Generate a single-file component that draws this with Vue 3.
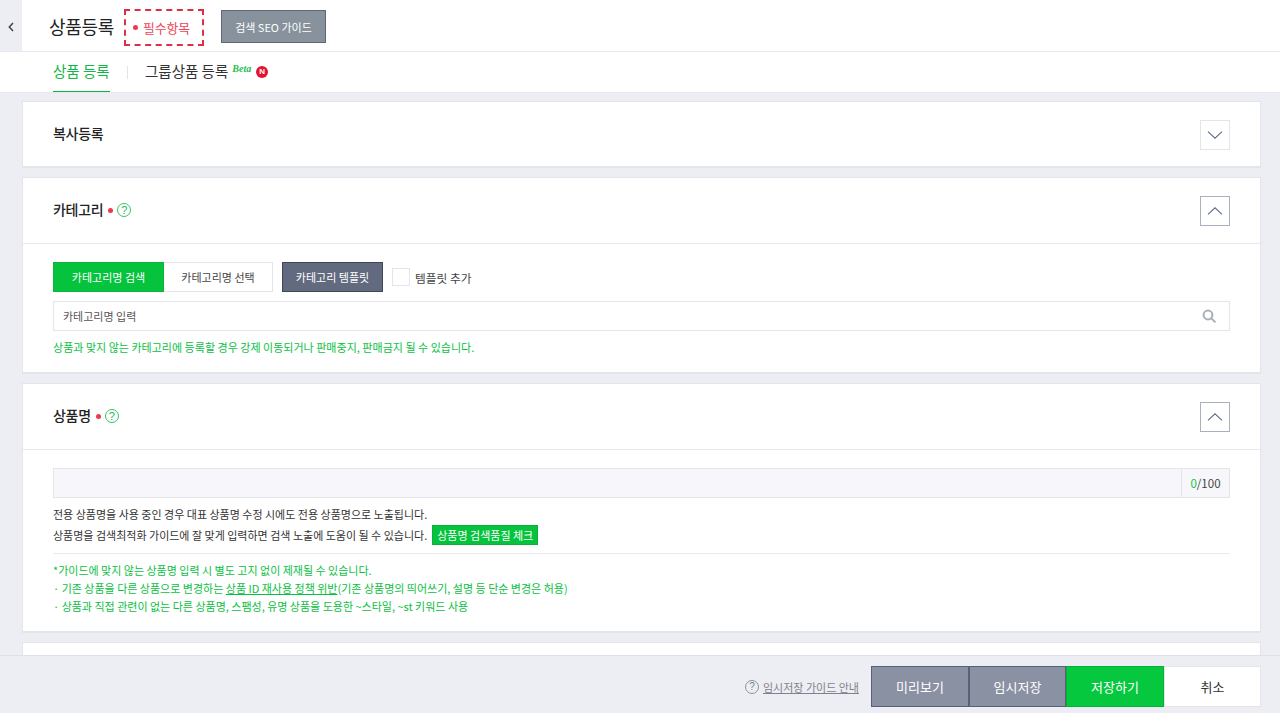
<script setup>
const tabs = [
  { label: '상품 등록', active: true },
  { label: '그룹상품 등록', active: false }
]
</script>

<template>
  <div class="page">
    <header class="top">
      <button class="back" aria-label="뒤로">
        <svg width="6" height="10" viewBox="0 0 6 10"><path d="M5 1 1.3 5 5 9" fill="none" stroke="#444" stroke-width="1.5"/></svg>
      </button>
      <h1 class="title">상품등록</h1>
      <div class="legend"><i class="dot"></i>필수항목</div>
      <button class="seo">검색 SEO 가이드</button>
    </header>

    <nav class="tabs">
      <a class="tab active">{{ tabs[0].label }}</a>
      <span class="sep"></span>
      <a class="tab">{{ tabs[1].label }}</a>
      <em class="beta">Beta</em>
      <span class="new">N</span>
    </nav>

    <main class="content">
      <section class="card">
        <div class="card-head short">
          <h2>복사등록</h2>
          <button class="fold" aria-label="펼치기">
            <svg width="16" height="8" viewBox="0 0 16 8"><path d="M1 .6l7 6.6 7-6.6" fill="none" stroke="#5f6b85" stroke-width="1.1"/></svg>
          </button>
        </div>
      </section>

      <section class="card">
        <div class="card-head ruled">
          <h2>카테고리</h2>
          <i class="dot heading-dot"></i>
          <span class="help">?</span>
          <button class="fold open" aria-label="접기">
            <svg width="16" height="8" viewBox="0 0 16 8"><path d="M1 7.4l7-6.6 7 6.6" fill="none" stroke="#5f6b85" stroke-width="1.1"/></svg>
          </button>
        </div>
        <div class="card-body cat-body">
          <div class="cat-actions">
            <button class="seg on">카테고리명 검색</button>
            <button class="seg">카테고리명 선택</button>
            <button class="tpl">카테고리 템플릿</button>
            <span class="check"></span>
            <span class="check-label">템플릿 추가</span>
          </div>
          <div class="search">
            <span>카테고리명 입력</span>
            <svg width="15" height="15" viewBox="0 0 15 15"><circle cx="6" cy="6" r="4.4" fill="none" stroke="#a9aebb" stroke-width="2"/><path d="M9.4 9.4 13.4 13.4" stroke="#a9aebb" stroke-width="2"/></svg>
          </div>
          <p class="note">상품과 맞지 않는 카테고리에 등록할 경우 강제 이동되거나 판매중지, 판매금지 될 수 있습니다.</p>
        </div>
      </section>

      <section class="card">
        <div class="card-head ruled">
          <h2>상품명</h2>
          <i class="dot heading-dot"></i>
          <span class="help">?</span>
          <button class="fold open" aria-label="접기">
            <svg width="16" height="8" viewBox="0 0 16 8"><path d="M1 7.4l7-6.6 7 6.6" fill="none" stroke="#5f6b85" stroke-width="1.1"/></svg>
          </button>
        </div>
        <div class="card-body name-body">
          <div class="name-input">
            <div class="name-field"></div>
            <div class="count"><b>0</b>/100</div>
          </div>
          <p class="desc first">전용 상품명을 사용 중인 경우 대표 상품명 수정 시에도 전용 상품명으로 노출됩니다.</p>
          <p class="desc second">상품명을 검색최적화 가이드에 잘 맞게 입력하면 검색 노출에 도움이 될 수 있습니다.<button class="check-btn">상품명 검색품질 체크</button></p>
          <div class="rules">
            <p>*가이드에 맞지 않는 상품명 입력 시 별도 고지 없이 제재될 수 있습니다.</p>
            <p>· 기존 상품을 다른 상품으로 변경하는 <u>상품 ID 재사용 정책 위반</u>(기존 상품명의 띄어쓰기, 설명 등 단순 변경은 허용)</p>
            <p>· 상품과 직접 관련이 없는 다른 상품명, 스팸성, 유명 상품을 도용한 ~스타일, ~st 키워드 사용</p>
          </div>
        </div>
      </section>

      <section class="card stub"></section>
    </main>

    <footer class="foot">
      <span class="foot-help">?</span>
      <a class="foot-link">임시저장 가이드 안내</a>
      <div class="foot-btns">
        <button class="fbtn gray">미리보기</button>
        <button class="fbtn gray narrow">임시저장</button>
        <button class="fbtn green">저장하기</button>
        <button class="fbtn white">취소</button>
      </div>
    </footer>
  </div>
</template>

<style>
html, body { margin: 0; overflow: hidden; }
</style>

<style scoped>
* { box-sizing: border-box; }
.page {
  position: relative;
  height: 713px;
  display: flex;
  flex-direction: column;
  overflow: hidden;
  background: #eceef3;
  font-family: "Noto Sans CJK KR", "Liberation Sans", sans-serif;
  color: #222;
}
button { font-family: inherit; padding: 0; cursor: pointer; }
h1, h2, p { margin: 0; }

.top {
  flex: none;
  height: 52px;
  display: flex;
  align-items: center;
  background: #fff;
  border-bottom: 1px solid #e6e8ed;
}
.back {
  width: 22px;
  height: 51px;
  border: 0;
  padding-top: 3px;
  background: #eceef3;
  display: flex;
  align-items: center;
  justify-content: center;
}
.title {
  margin-left: 27px;
  font-size: 18px;
  font-weight: 400;
  letter-spacing: -0.3px;
  line-height: 26px;
  width: 66px;
  white-space: nowrap;
}
.legend {
  margin: 4px 0 0 9px;
  width: 80px;
  height: 37px;
  border: 2px dashed #dd2f45;
  display: flex;
  align-items: center;
  padding-left: 7px;
  font-size: 12.8px;
  color: #ee4459;
  white-space: nowrap;
}
.dot {
  display: block;
  width: 5px;
  height: 5px;
  border-radius: 50%;
  background: #f1374d;
  flex: none;
}
.legend .dot { margin-right: 5px; }
.seo {
  margin: 2px 0 0 17px;
  width: 105px;
  height: 33px;
  border: 1px solid #5e6874;
  background: #87929d;
  color: #fff;
  font-size: 11px;
}

.tabs {
  flex: none;
  height: 41px;
  display: flex;
  align-items: center;
  padding-left: 53px;
  background: #fff;
  border-bottom: 1px solid #e6e8ed;
}
.tab {
  height: 40px;
  line-height: 37px;
  font-size: 14.5px;
  color: #333;
  white-space: nowrap;
}
.tab.active {
  width: 57px;
  color: #0fb843;
  border-bottom: 1px solid #0cb53d;
}
.sep {
  width: 1px;
  height: 13px;
  margin: 0 17px;
  background: #e2e4ea;
}
.beta {
  margin: -7px 0 0 4px;
  font-family: "Liberation Serif", serif;
  font-size: 10px;
  font-weight: 700;
  color: #1fbf4c;
}
.new {
  margin: -1px 0 0 5px;
  width: 12px;
  height: 12px;
  border-radius: 50%;
  background: #e5132f;
  color: #fff;
  font-family: "Liberation Sans", sans-serif;
  font-size: 8px;
  font-weight: 700;
  line-height: 12px;
  text-align: center;
}

.content {
  flex: 1;
  min-height: 0;
  overflow: hidden;
  padding: 8px 19px 0 22px;
  display: flex;
  flex-direction: column;
  gap: 9px;
}
.card {
  flex: none;
  background: #fff;
  border: 1px solid #e3e5ea;
  border-bottom-width: 2px;
}
.card-head {
  height: 64px;
  display: flex;
  align-items: flex-start;
  padding: 0 30px;
}
.card-head.ruled { height: 66px; border-bottom: 1px solid #e6e8ed; }
.card-head h2 {
  margin-top: 21px;
  font-size: 14px;
  font-weight: 500;
  line-height: 20px;
  letter-spacing: -0.3px;
  white-space: nowrap;
}
.heading-dot { margin: 30px 0 0 5px; }
.help {
  margin: 25px 0 0 4px;
  width: 14px;
  height: 14px;
  border: 1px solid #35c463;
  border-radius: 50%;
  color: #22b64e;
  font-family: "Liberation Sans", sans-serif;
  font-size: 11px;
  line-height: 12px;
  text-align: center;
}
.fold {
  margin: 18px 0 0 auto;
  width: 30px;
  height: 30px;
  border: 1px solid #e3e5ea;
  background: #fff;
  display: flex;
  align-items: center;
  justify-content: center;
}
.fold.open { border-color: #a9afbd; }

.card-body { padding: 0 30px; }
.cat-body { height: 128px; padding-top: 18px; }
.cat-actions { display: flex; align-items: center; height: 30px; }
.seg {
  width: 109px;
  height: 30px;
  border: 1px solid #e3e5ea;
  border-left-width: 0;
  background: #fff;
  color: #444;
  font-size: 11px;
}
.seg.on {
  width: 111px;
  border: 1px solid #0cb53d;
  background: #06c33d;
  color: #fff;
}
.tpl {
  margin-left: 9px;
  width: 101px;
  height: 30px;
  border: 1px solid #3f4658;
  background: #626a80;
  color: #fff;
  font-size: 11px;
}
.check {
  margin-left: 9px;
  width: 18px;
  height: 18px;
  border: 1px solid #e3e5ea;
}
.check-label { margin-left: 5px; font-size: 11.7px; color: #444; white-space: nowrap; }
.search {
  margin-top: 9px;
  height: 30px;
  border: 1px solid #e3e5ea;
  display: flex;
  align-items: center;
  justify-content: space-between;
  padding: 0 12px 0 9px;
  font-size: 11px;
  color: #555;
}
.note {
  margin-top: 8px;
  font-size: 11px;
  line-height: 17px;
  letter-spacing: 0.02px;
  color: #0abf3f;
  white-space: nowrap;
}

.name-body { height: 181px; padding-top: 18px; }
.name-input {
  height: 30px;
  display: flex;
  border: 1px solid #e3e5ea;
  background: #f7f7fb;
}
.name-field { flex: 1; }
.count {
  width: 48px;
  border-left: 1px solid #e3e5ea;
  font-size: 11.5px;
  line-height: 28px;
  text-align: center;
  color: #444;
}
.count b { font-weight: 400; color: #0cc33f; }
.desc {
  font-size: 11px;
  line-height: 18px;
  color: #333;
  white-space: nowrap;
}
.desc.first { margin-top: 7px; }
.desc.second { margin-top: 2px; height: 20px; display: flex; align-items: center; }
.check-btn {
  margin-left: 5px;
  width: 106px;
  height: 20px;
  border: 1px solid #0fae3f;
  background: #06c33d;
  color: #fff;
  font-size: 11px;
  white-space: nowrap;
}
.rules {
  margin-top: 8px;
  padding-top: 7px;
  border-top: 1px solid #e9ebef;
  font-size: 11px;
  line-height: 18px;
  color: #0abf3f;
  white-space: nowrap;
}
.stub { height: 80px; }

.foot {
  position: absolute;
  left: 0;
  right: 0;
  bottom: 0;
  height: 58px;
  display: flex;
  align-items: center;
  justify-content: flex-end;
  padding: 4px 19px 0 0;
  background: #eceef3;
  border-top: 1px solid #dfe1e7;
}
.foot-help {
  width: 14px;
  height: 14px;
  border: 1px solid #8d929e;
  border-radius: 50%;
  color: #7d828e;
  font-family: "Liberation Sans", sans-serif;
  font-size: 10px;
  line-height: 12px;
  text-align: center;
}
.foot-link {
  margin-left: 4px;
  font-size: 11px;
  color: #7d828e;
  text-decoration: underline;
  white-space: nowrap;
}
.foot-btns { margin-left: 12px; display: flex; }
.fbtn {
  width: 98px;
  height: 41px;
  font-size: 13px;
}
.fbtn.narrow { width: 97px; }
.fbtn.gray { border: 1px solid #59617a; background: #8a91a3; color: #fff; }
.fbtn.green { border: 1px solid #05b236; background: #06c83e; color: #fff; }
.fbtn.white { width: 97px; border: 1px solid #e3e5ea; background: #fff; color: #333; }
</style>
